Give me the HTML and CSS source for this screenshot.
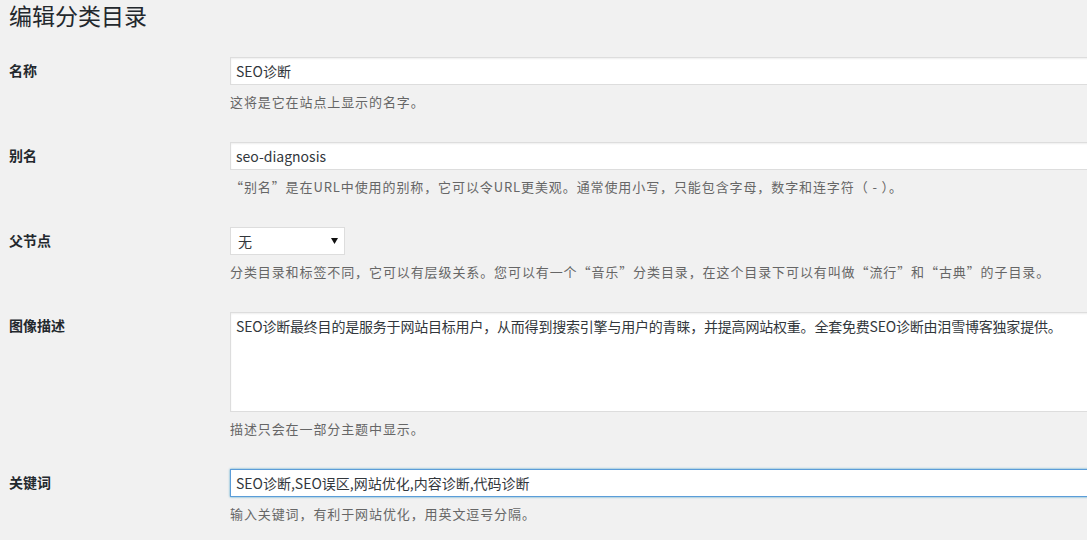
FILE: index.html
```html
<!DOCTYPE html>
<html lang="zh-CN">
<head>
<meta charset="utf-8">
<title>编辑分类目录</title>
<link rel="stylesheet" href="styles.css">
</head>
<body>
<div class="wrap">
  <h1 class="title">编辑分类目录</h1>
  <div class="form">
    <div class="row">
      <div class="label">名称</div>
      <div class="field">
        <input class="text" type="text" value="SEO诊断">
        <p class="desc">这将是它在站点上显示的名字。</p>
      </div>
    </div>
    <div class="row">
      <div class="label">别名</div>
      <div class="field">
        <input class="text" type="text" value="seo-diagnosis">
        <p class="desc">“别名”是在URL中使用的别称，它可以令URL更美观。通常使用小写，只能包含字母，数字和连字符（ - ）。</p>
      </div>
    </div>
    <div class="row">
      <div class="label">父节点</div>
      <div class="field">
        <div class="select"><span>无</span><svg class="arrow" width="7" height="6" viewBox="0 0 7 6"><path d="M0 0H7L3.5 6Z" fill="#111"/></svg></div>
        <p class="desc">分类目录和标签不同，它可以有层级关系。您可以有一个“音乐”分类目录，在这个目录下可以有叫做“流行”和“古典”的子目录。</p>
      </div>
    </div>
    <div class="row">
      <div class="label">图像描述</div>
      <div class="field">
        <textarea class="area">SEO诊断最终目的是服务于网站目标用户，从而得到搜索引擎与用户的青睐，并提高网站权重。全套免费SEO诊断由泪雪博客独家提供。</textarea>
        <p class="desc">描述只会在一部分主题中显示。</p>
      </div>
    </div>
    <div class="row">
      <div class="label">关键词</div>
      <div class="field">
        <input class="text focus" type="text" value="SEO诊断,SEO误区,网站优化,内容诊断,代码诊断">
        <p class="desc">输入关键词，有利于网站优化，用英文逗号分隔。</p>
      </div>
    </div>
  </div>
</div>
</body>
</html>
```

FILE: styles.css
```css
html, body {
  margin: 0;
  padding: 0;
  overflow: hidden;
  background: #f1f1f1;
}

body {
  font-family: "Noto Sans CJK SC", "Noto Sans", sans-serif;
  font-size: 14px;
  color: #444;
}

.wrap {
  padding-left: 9px;
}

.title {
  margin: 0;
  font-size: 23px;
  font-weight: 400;
  line-height: 30px;
  color: #23282d;
}

.form {
  margin-top: 12px;
}

.row {
  display: grid;
  grid-template-columns: 221px 1fr;
  padding: 15px 0 14px;
}

.label {
  margin-top: 4px;
  font-size: 14px;
  line-height: 18px;
  font-weight: 700;
  color: #23282d;
}

.field {
  min-width: 0;
}

.text,
.area,
.select {
  box-sizing: border-box;
  display: block;
  margin: 0;
  border: 1px solid #ddd;
  background: #fff;
  box-shadow: inset 0 1px 2px rgba(0, 0, 0, 0.07);
  font-family: "Noto Sans CJK SC", "Noto Sans", sans-serif;
  font-size: 14px;
  color: #32373c;
  outline: none;
}

.text {
  width: 900px;
  height: 28px;
  padding: 0 5px;
  line-height: 26px;
}

.text.focus {
  border-color: #5b9dd9;
  box-shadow: 0 0 2px rgba(30, 140, 190, 0.8);
}

.select {
  width: 115px;
  height: 28px;
  padding: 0 6px 0 7px;
  display: flex;
  align-items: center;
  justify-content: space-between;
  box-shadow: none;
}

.arrow {
  display: block;
}

.area {
  width: 1000px;
  height: 100px;
  padding: 3px 5px;
  line-height: 20px;
  letter-spacing: -0.2px;
  resize: none;
  margin-bottom: 2px;
}

.desc {
  margin: 6px 0 0;
  font-size: 13px;
  line-height: 22px;
  letter-spacing: 0.9px;
  color: #666;
}
```
